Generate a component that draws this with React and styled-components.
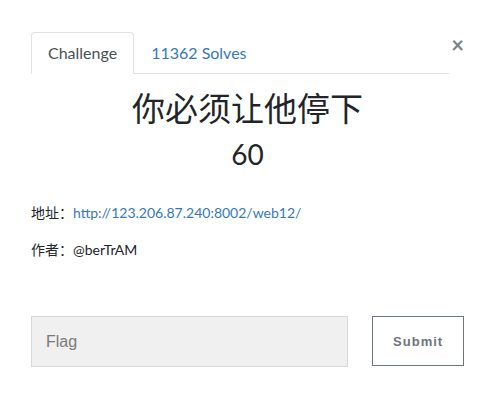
import React from "react";
import styled, { createGlobalStyle } from "styled-components";

const GlobalStyle = createGlobalStyle`
  html, body {
    margin: 0;
    padding: 0;
    background: #fff;
  }
  body {
    font-family: Lato, "Noto Sans CJK SC", sans-serif;
    color: #212529;
  }
`;

const Modal = styled.div`
  width: 496px;
  height: 416px;
  box-sizing: border-box;
  padding: 32px 32px 0 31px;
`;

const TopRow = styled.div`
  display: flex;
  align-items: flex-start;
`;

const Tabs = styled.ul`
  display: flex;
  list-style: none;
  margin: 0;
  padding: 0;
  width: 420px;
  border-bottom: 1px solid #dee2e6;
`;

const Tab = styled.li`
  margin-bottom: -1px;
  padding: 8px 16px;
  font-size: 16px;
  line-height: 24px;
  border: 1px solid ${(p) => (p.$active ? "#dee2e6" : "transparent")};
  border-bottom-color: ${(p) => (p.$active ? "#fff" : "transparent")};
  border-radius: 4px 4px 0 0;
  background: ${(p) => (p.$active ? "#fff" : "transparent")};
  color: ${(p) => (p.$active ? "#495057" : "#337ab7")};
  cursor: pointer;
`;

const Close = styled.button`
  margin-left: auto;
  margin-top: 2px;
  margin-right: -2px;
  border: 0;
  background: none;
  padding: 0 2px;
  font-family: Lato, sans-serif;
  font-size: 22px;
  font-weight: 700;
  line-height: 22px;
  color: #7b8289;
  cursor: pointer;
`;

const Header = styled.div`
  text-align: center;
  padding-top: 15px;
`;

const Title = styled.h2`
  margin: 0;
  font-size: 33px;
  font-weight: 400;
  line-height: 38px;
  color: #212529;
`;

const Value = styled.h3`
  margin: 10px 0 0;
  font-size: 28px;
  font-weight: 400;
  line-height: 34px;
  color: #212529;
`;

const Info = styled.div`
  padding-top: 31px;
`;

const Line = styled.p`
  margin: 0 0 16px;
  font-size: 14px;
  line-height: 21px;
  color: #212529;

  a {
    color: #337ab7;
    text-decoration: none;
  }
`;

const Form = styled.form`
  display: flex;
  align-items: flex-start;
  gap: 24px;
  margin-top: 56px;
`;

const FlagInput = styled.input`
  width: 318px;
  height: 51px;
  box-sizing: border-box;
  border: 1px solid #d4d7dc;
  background: #f0f0f0;
  padding: 0 14px;
  font-family: "Liberation Sans", Arial, sans-serif;
  font-size: 16px;
  color: #333;
  outline: none;

  &::placeholder {
    color: #7a7a7a;
  }
`;

const SubmitButton = styled.button`
  width: 92px;
  height: 50px;
  box-sizing: border-box;
  border: 1px solid #6c757d;
  background: #fff;
  font-family: "Liberation Sans", Arial, sans-serif;
  font-size: 13px;
  font-weight: 700;
  letter-spacing: 1px;
  color: #6c757d;
  cursor: pointer;
`;

export default function App() {
  return (
    <>
      <GlobalStyle />
      <Modal>
        <TopRow>
          <Tabs>
            <Tab $active>Challenge</Tab>
            <Tab>11362 Solves</Tab>
          </Tabs>
          <Close aria-label="Close">×</Close>
        </TopRow>
        <Header>
          <Title>你必须让他停下</Title>
          <Value>60</Value>
        </Header>
        <Info>
          <Line>
            地址：<a href="#">http://123.206.87.240:8002/web12/</a>
          </Line>
          <Line>作者：@berTrAM</Line>
        </Info>
        <Form onSubmit={(e) => e.preventDefault()}>
          <FlagInput placeholder="Flag" />
          <SubmitButton type="submit">Submit</SubmitButton>
        </Form>
      </Modal>
    </>
  );
}
